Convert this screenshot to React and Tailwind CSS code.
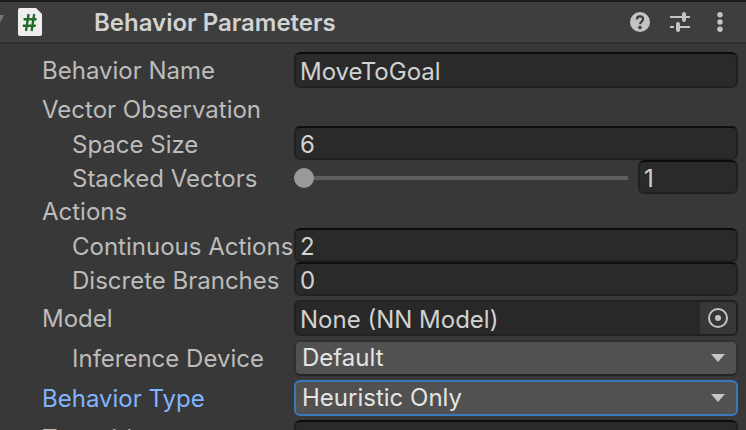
import React, { useState } from "react";

const fieldClass =
  "min-w-0 rounded-md border-2 border-[#212121] border-t-[#0d0d0d] bg-[#2a2a2a] px-1 pt-1 text-2xl text-[#d2d2d2] outline-none";

function Row({ id, label, indent = false, tall = false, gap = false, active = false, children }) {
  return (
    <div className={`flex shrink-0 items-stretch ${tall ? "h-9" : "h-[34px]"} ${gap ? "mt-1" : ""}`}>
      <label
        htmlFor={id}
        className={`flex w-[294px] shrink-0 items-center whitespace-nowrap leading-8 ${tall ? "pt-0.5" : "pt-1"} ${indent ? "pl-[72px]" : "pl-[42px]"} ${active ? "text-[#81b4ff]" : "text-[#bcbcbc]"}`}
      >
        {label}
      </label>
      {children}
    </div>
  );
}

function TextField({ id, defaultValue }) {
  return <input id={id} type="text" defaultValue={defaultValue} className={`${fieldClass} flex-1`} />;
}

function Dropdown({ id, options, active = false }) {
  return (
    <div className="relative flex min-w-0 flex-1">
      <select
        id={id}
        defaultValue={options[0]}
        className={`w-full appearance-none rounded-md border-2 bg-[#515151] pl-1.5 pr-10 pb-0.5 text-2xl leading-8 text-[#e4e4e4] outline-none ${active ? "border-[#3a79bb]" : "border-[#303030] border-b-[#242424]"}`}
      >
        {options.map((option) => (
          <option key={option}>{option}</option>
        ))}
      </select>
      <svg className="pointer-events-none absolute top-3.5 right-3 h-2 w-4" viewBox="0 0 16 8" aria-hidden="true">
        <path d="M1 0h14L8 8z" fill="#c4c4c4" />
      </svg>
    </div>
  );
}

function ScriptIcon() {
  return (
    <svg className="h-7 w-6" viewBox="0 0 24 28" aria-hidden="true">
      <path d="M2 0h16l6 6v20a2 2 0 0 1-2 2H2a2 2 0 0 1-2-2V2a2 2 0 0 1 2-2z" fill="#eeeeee" />
      <path d="M10.6 6 8 23M16.2 6l-2.6 17M5.6 11.2h13M4.8 17.7h13" stroke="#256b28" strokeWidth="2.4" fill="none" />
    </svg>
  );
}

function Header() {
  return (
    <header className="flex h-11 shrink-0 items-center border-t-2 border-b-2 border-t-[#1a1a1a] border-b-[#303030] bg-[#3e3e3e] pr-4">
      <button type="button" aria-label="Collapse component" className="flex h-full w-[18px] items-center">
        <svg className="-mt-1.5 h-2 w-1" viewBox="0 0 4 8" aria-hidden="true">
          <path d="M0 0h4L0 8z" fill="#757575" />
        </svg>
      </button>
      <ScriptIcon />
      <h1 className="ml-[52px] flex-1 whitespace-nowrap pt-0.5 font-semibold leading-8 text-[#d2d2d2]">Behavior Parameters</h1>
      <div className="flex items-center gap-5">
        <button type="button" aria-label="Help">
          <svg className="size-5" viewBox="0 0 20 20" aria-hidden="true">
            <circle cx="10" cy="10" r="10" fill="#c4c4c4" />
            <path d="M6.9 7.4C6.9 5.4 8.1 4.3 10 4.3s3.2 1.1 3.2 2.8c0 2.2-3.1 2.4-3.1 5.1" fill="none" stroke="#3e3e3e" strokeWidth="2.2" />
            <circle cx="10" cy="15.6" r="1.8" fill="#3e3e3e" />
          </svg>
        </button>
        <button type="button" aria-label="Presets">
          <svg className="size-5" viewBox="0 0 20 20" fill="none" stroke="#c4c4c4" aria-hidden="true">
            <path d="M0 5h12M16 5h4M0 15h4M8 15h12" strokeWidth="2" />
            <path d="M14 2v6M8 12v6" strokeWidth="4" strokeLinecap="round" />
          </svg>
        </button>
        <button type="button" aria-label="More options" className="flex w-5 justify-center">
          <svg className="h-5 w-1.5" viewBox="0 0 6 20" fill="#c4c4c4" aria-hidden="true">
            <circle cx="3" cy="2.7" r="2.7" />
            <circle cx="3" cy="10" r="2.7" />
            <circle cx="3" cy="17.3" r="2.7" />
          </svg>
        </button>
      </div>
    </header>
  );
}

export default function App() {
  const [stacked, setStacked] = useState("1");

  return (
    <main className="flex h-screen flex-col overflow-hidden bg-[#383838] font-[Inter,sans-serif] text-2xl">
      <Header />
      <form className="flex flex-col pt-2 pr-2">
        <Row id="name" label="Behavior Name" tall>
          <TextField id="name" defaultValue="MoveToGoal" />
        </Row>
        <h2 className="mt-1 flex h-[34px] items-center pt-0.5 pl-[42px] leading-8 text-[#bcbcbc]">Vector Observation</h2>
        <Row id="space" label="Space Size" indent>
          <TextField id="space" defaultValue="6" />
        </Row>
        <Row id="stacked" label="Stacked Vectors" indent>
          <input
            id="stacked"
            type="range"
            min="1"
            max="50"
            value={stacked}
            onChange={(e) => setStacked(e.target.value)}
            className="mt-0.5 mr-2.5 min-w-0 flex-1 appearance-none bg-transparent outline-none [&::-webkit-slider-runnable-track]:h-1 [&::-webkit-slider-runnable-track]:bg-[#5e5e5e] [&::-webkit-slider-thumb]:-mt-2 [&::-webkit-slider-thumb]:size-5 [&::-webkit-slider-thumb]:appearance-none [&::-webkit-slider-thumb]:rounded-full [&::-webkit-slider-thumb]:bg-[#999999]"
          />
          <input
            type="text"
            aria-label="Stacked Vectors value"
            value={stacked}
            onChange={(e) => setStacked(e.target.value)}
            className={`${fieldClass} w-[100px]`}
          />
        </Row>
        <h2 className="flex h-[34px] items-center pt-0.5 pl-[42px] leading-8 text-[#bcbcbc]">Actions</h2>
        <Row id="continuous" label="Continuous Actions" indent>
          <TextField id="continuous" defaultValue="2" />
        </Row>
        <Row id="discrete" label="Discrete Branches" indent>
          <TextField id="discrete" defaultValue="0" />
        </Row>
        <Row id="model" label="Model" tall gap>
          <div className="flex min-w-0 flex-1 overflow-hidden rounded-md border-2 border-[#212121] bg-[#282828]">
            <input
              id="model"
              type="text"
              readOnly
              defaultValue="None (NN Model)"
              className="min-w-0 flex-1 bg-transparent px-1 pt-1 text-2xl text-[#d2d2d2] outline-none"
            />
            <button type="button" aria-label="Select model" className="flex w-9 items-center justify-center bg-[#373737]">
              <svg className="size-5" viewBox="0 0 20 20" aria-hidden="true">
                <circle cx="10" cy="10" r="9" fill="none" stroke="#c4c4c4" strokeWidth="2" />
                <circle cx="10" cy="10" r="3" fill="#c4c4c4" />
              </svg>
            </button>
          </div>
        </Row>
        <Row id="device" label="Inference Device" indent tall gap>
          <Dropdown id="device" options={["Default", "GPU", "Burst", "CPU"]} />
        </Row>
        <Row id="type" label="Behavior Type" tall gap active>
          <Dropdown id="type" options={["Heuristic Only", "Default", "Inference Only"]} active />
        </Row>
        <Row id="team" label="Team Id" tall gap>
          <TextField id="team" defaultValue="0" />
        </Row>
      </form>
    </main>
  );
}
